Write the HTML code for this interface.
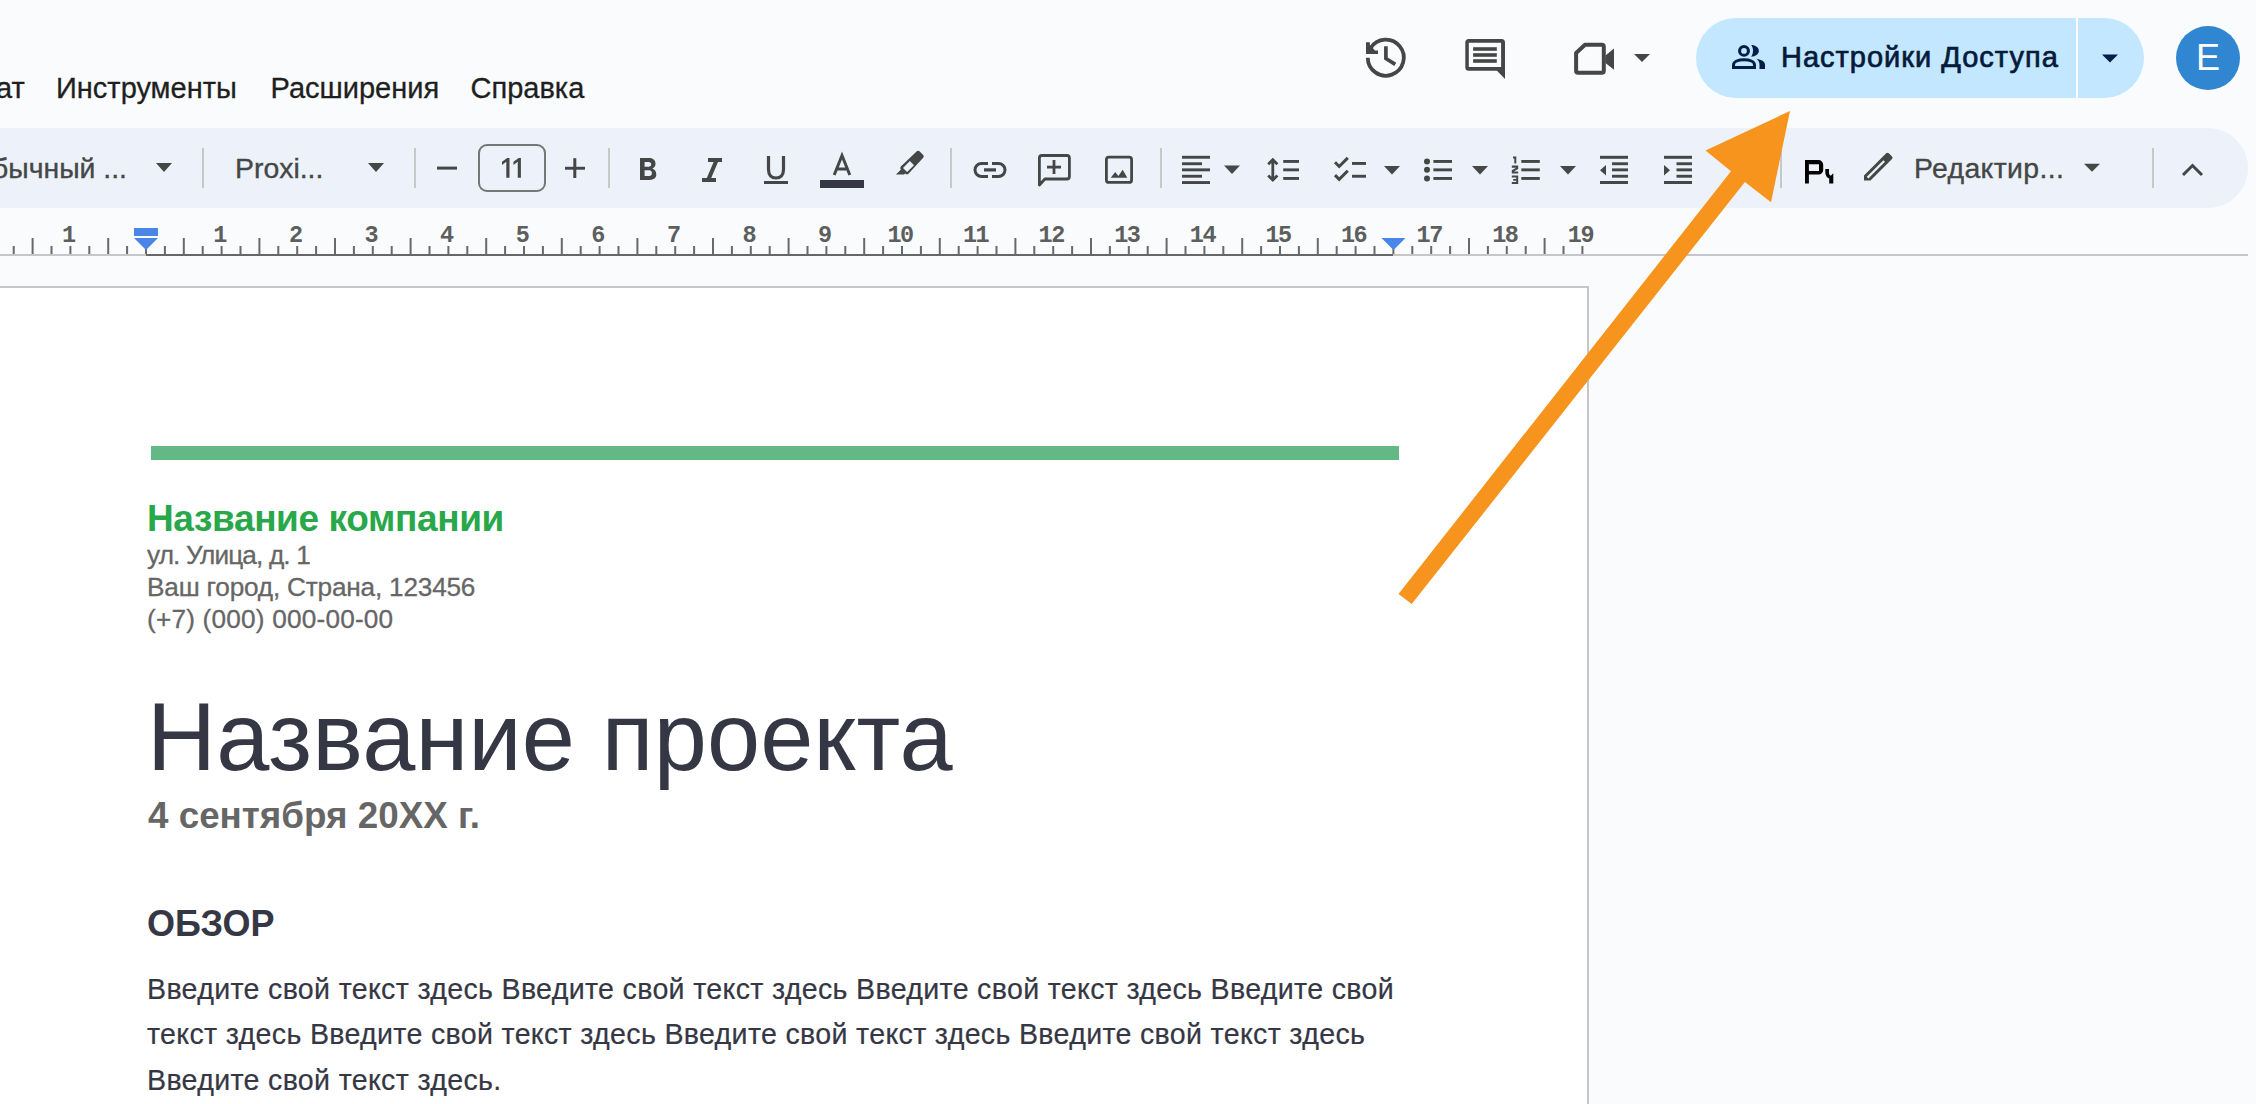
<!DOCTYPE html>
<html><head><meta charset="utf-8">
<style>
*{margin:0;padding:0;box-sizing:border-box}
html,body{width:2256px;height:1104px;overflow:hidden;background:#f9fbfd;font-family:"Liberation Sans",sans-serif;position:relative}
.a{position:absolute;white-space:nowrap}
.menu{font-size:29px;color:#1f1f1f;top:71.3px;line-height:34px;-webkit-text-stroke:0.3px #1f1f1f}
.tb{position:absolute;left:-40px;top:128px;width:2288px;height:80px;background:#edf2fa;border-radius:40px}
.tt{font-size:28.4px;color:#444746;line-height:34px;top:151px;-webkit-text-stroke:0.35px #444746}
.sep{position:absolute;width:2px;background:#c7c7c7;top:148px;height:40px}
.ruler-num{position:absolute;font-size:21px;color:#5f6368;top:222px;line-height:24px;transform:translateX(-50%)}
.page{position:absolute;left:-10px;top:286px;width:1599px;height:900px;background:#fff;border:2px solid #c6c6c6}
.doc{position:absolute;white-space:nowrap}
</style></head><body>

<!-- menu -->
<div class="a menu" style="left:-4px">ат</div>
<div class="a menu" style="left:56px">Инструменты</div>
<div class="a menu" style="left:270.5px">Расширения</div>
<div class="a menu" style="left:470.5px">Справка</div>

<!-- top right icons -->
<svg class="a" style="left:0;top:0" width="1700" height="100" viewBox="0 0 1700 100" fill="#444746">
<path d="M1367.8 57.7A18 18 0 1 0 1370.5 48.2" fill="none" stroke="#444746" stroke-width="3.8"/>
<path d="M1366 42.2H1369.9V45L1375 50.4H1378V54H1366Z"/>
<path d="M1385.9 46.2V58.5L1395.3 64.4" fill="none" stroke="#444746" stroke-width="3.7"/>
<path fill-rule="evenodd" d="M1468.8 38.9H1501.5A3.5 3.5 0 0 1 1505 42.4V78.9L1497 70.8H1468.8A3.5 3.5 0 0 1 1465.3 67.3V42.4A3.5 3.5 0 0 1 1468.8 38.9ZM1468.8 42.8V66.9H1501.1V42.8Z"/>
<rect x="1473.1" y="47.2" width="23.7" height="3.6"/>
<rect x="1473.1" y="53.2" width="23.7" height="3.6"/>
<rect x="1473.1" y="59.2" width="23.7" height="3.6"/>
</svg>
<svg class="a" style="left:1573px;top:40px" width="44" height="36" viewBox="0 0 44 36" fill="none" stroke="#444746" stroke-width="4" stroke-linejoin="round">
<path d="M12 4.8H28.8a2 2 0 0 1 2 2V30.8a2 2 0 0 1-2 2H5.1a2 2 0 0 1-2-2V13z"/>
<path d="M32.5 15.5L41 8.4V29.8L32.5 23Z" fill="#444746" stroke="none"/>
</svg>
<svg class="a" style="left:1634px;top:54px" width="16" height="8" viewBox="0 0 16 8"><path d="M0 0h16L8 8z" fill="#444746"/></svg>

<!-- share button -->
<div class="a" style="left:1696px;top:18px;width:448px;height:80px;border-radius:40px;background:#c2e7ff"></div>
<div class="a" style="left:2076px;top:18px;width:2px;height:80px;background:#f9fbfd"></div>
<svg class="a" style="left:0;top:0" width="1800" height="100" viewBox="0 0 1800 100" fill="#041e49">
<circle cx="1744" cy="50.9" r="4.4" fill="none" stroke="#041e49" stroke-width="3.1"/>
<path d="M1733.5 67.4V65C1733.5 61.5 1738.5 59.8 1744 59.8C1749.5 59.8 1754.5 61.5 1754.5 65V67.4Z" fill="none" stroke="#041e49" stroke-width="3"/>
<path d="M1751.2 45C1755.5 45 1758.9 47.6 1758.9 50.85C1758.9 54.1 1755.5 56.7 1751.2 56.7C1752.5 55 1753 53 1753 50.85C1753 48.7 1752.5 46.7 1751.2 45Z"/>
<path d="M1756.5 58.7C1761.8 59.6 1765 61.8 1765 64.5V68.9H1759.5V64.5C1759.5 62.3 1758.5 60.3 1756.5 58.7Z"/>
</svg>
<div class="a" id="share" style="left:1781px;top:57.2px;font-size:29px;font-weight:normal;-webkit-text-stroke:0.7px #061a3a;color:#061a3a;line-height:0;letter-spacing:1px">Настройки Доступа</div>
<svg class="a" style="left:2102px;top:54px" width="16" height="9" viewBox="0 0 16 8"><path d="M0 0h16L8 8z" fill="#041e49"/></svg>

<!-- avatar -->
<div class="a" style="left:2176px;top:26px;width:64px;height:64px;border-radius:50%;background:#3086d0;color:#fff;font-size:36px;line-height:64px;text-align:center">E</div>

<!-- ruler -->
<svg class="a" style="left:0;top:0" width="2256" height="290" viewBox="0 0 2256 290">
<rect x="0" y="254" width="2248" height="2" fill="#c7c7c7"/>
<rect x="146" y="254" width="1247" height="2" fill="#656866"/>
<g fill="#676a68"><rect x="12.7" y="246" width="2" height="8"/><rect x="31.6" y="238" width="2" height="16"/><rect x="50.5" y="246" width="2" height="8"/><rect x="69.4" y="246" width="2" height="8"/><rect x="88.3" y="246" width="2" height="8"/><rect x="107.2" y="238" width="2" height="16"/><rect x="126.1" y="246" width="2" height="8"/><rect x="145.0" y="246" width="2" height="8"/><rect x="163.9" y="246" width="2" height="8"/><rect x="182.8" y="238" width="2" height="16"/><rect x="201.7" y="246" width="2" height="8"/><rect x="220.6" y="246" width="2" height="8"/><rect x="239.5" y="246" width="2" height="8"/><rect x="258.4" y="238" width="2" height="16"/><rect x="277.3" y="246" width="2" height="8"/><rect x="296.2" y="246" width="2" height="8"/><rect x="315.1" y="246" width="2" height="8"/><rect x="334.0" y="238" width="2" height="16"/><rect x="352.9" y="246" width="2" height="8"/><rect x="371.8" y="246" width="2" height="8"/><rect x="390.7" y="246" width="2" height="8"/><rect x="409.6" y="238" width="2" height="16"/><rect x="428.5" y="246" width="2" height="8"/><rect x="447.4" y="246" width="2" height="8"/><rect x="466.3" y="246" width="2" height="8"/><rect x="485.2" y="238" width="2" height="16"/><rect x="504.1" y="246" width="2" height="8"/><rect x="523.0" y="246" width="2" height="8"/><rect x="541.9" y="246" width="2" height="8"/><rect x="560.8" y="238" width="2" height="16"/><rect x="579.7" y="246" width="2" height="8"/><rect x="598.6" y="246" width="2" height="8"/><rect x="617.5" y="246" width="2" height="8"/><rect x="636.4" y="238" width="2" height="16"/><rect x="655.3" y="246" width="2" height="8"/><rect x="674.2" y="246" width="2" height="8"/><rect x="693.1" y="246" width="2" height="8"/><rect x="712.0" y="238" width="2" height="16"/><rect x="730.9" y="246" width="2" height="8"/><rect x="749.8" y="246" width="2" height="8"/><rect x="768.7" y="246" width="2" height="8"/><rect x="787.6" y="238" width="2" height="16"/><rect x="806.5" y="246" width="2" height="8"/><rect x="825.4" y="246" width="2" height="8"/><rect x="844.3" y="246" width="2" height="8"/><rect x="863.2" y="238" width="2" height="16"/><rect x="882.1" y="246" width="2" height="8"/><rect x="901.0" y="246" width="2" height="8"/><rect x="919.9" y="246" width="2" height="8"/><rect x="938.8" y="238" width="2" height="16"/><rect x="957.7" y="246" width="2" height="8"/><rect x="976.6" y="246" width="2" height="8"/><rect x="995.5" y="246" width="2" height="8"/><rect x="1014.4" y="238" width="2" height="16"/><rect x="1033.3" y="246" width="2" height="8"/><rect x="1052.2" y="246" width="2" height="8"/><rect x="1071.1" y="246" width="2" height="8"/><rect x="1090.0" y="238" width="2" height="16"/><rect x="1108.9" y="246" width="2" height="8"/><rect x="1127.8" y="246" width="2" height="8"/><rect x="1146.7" y="246" width="2" height="8"/><rect x="1165.6" y="238" width="2" height="16"/><rect x="1184.5" y="246" width="2" height="8"/><rect x="1203.4" y="246" width="2" height="8"/><rect x="1222.3" y="246" width="2" height="8"/><rect x="1241.2" y="238" width="2" height="16"/><rect x="1260.1" y="246" width="2" height="8"/><rect x="1279.0" y="246" width="2" height="8"/><rect x="1297.9" y="246" width="2" height="8"/><rect x="1316.8" y="238" width="2" height="16"/><rect x="1335.7" y="246" width="2" height="8"/><rect x="1354.6" y="246" width="2" height="8"/><rect x="1373.5" y="246" width="2" height="8"/><rect x="1392.4" y="238" width="2" height="16"/><rect x="1411.3" y="246" width="2" height="8"/><rect x="1430.2" y="246" width="2" height="8"/><rect x="1449.1" y="246" width="2" height="8"/><rect x="1468.0" y="238" width="2" height="16"/><rect x="1486.9" y="246" width="2" height="8"/><rect x="1505.8" y="246" width="2" height="8"/><rect x="1524.7" y="246" width="2" height="8"/><rect x="1543.6" y="238" width="2" height="16"/><rect x="1562.5" y="246" width="2" height="8"/><rect x="1581.4" y="246" width="2" height="8"/></g>
<g fill="#5c5f5d" font-family="Liberation Mono" font-size="23.5" font-weight="bold" letter-spacing="-1.5" text-anchor="middle" transform="translate(-2 0)"><text x="70.4" y="242">1</text><text x="221.6" y="242">1</text><text x="297.2" y="242">2</text><text x="372.8" y="242">3</text><text x="448.4" y="242">4</text><text x="524.0" y="242">5</text><text x="599.6" y="242">6</text><text x="675.2" y="242">7</text><text x="750.8" y="242">8</text><text x="826.4" y="242">9</text><text x="902.0" y="242">10</text><text x="977.6" y="242">11</text><text x="1053.2" y="242">12</text><text x="1128.8" y="242">13</text><text x="1204.4" y="242">14</text><text x="1280.0" y="242">15</text><text x="1355.6" y="242">16</text><text x="1431.2" y="242">17</text><text x="1506.8" y="242">18</text><text x="1582.4" y="242">19</text></g>
<rect x="134" y="228" width="24" height="8" fill="#4a86e8"/>
<path d="M134 238h24l-12 12z" fill="#4a86e8"/>
<path d="M1381.5 238h24l-12 12z" fill="#4a86e8"/>
</svg>
<!-- page -->
<div class="a" style="left:-10px;top:286px;width:1599px;height:900px;background:#fff;border:2px solid #c6c6c6"></div>
<div class="a" style="left:151px;top:446px;width:1248px;height:14px;background:#63b886"></div>
<div class="doc" id="d1" style="left:147px;top:519px;font-size:37px;font-weight:bold;color:#29a84b;line-height:0;letter-spacing:-0.37px">Название компании</div>
<div class="doc" id="d2" style="left:147px;top:554.9px;font-size:26.2px;color:#666;line-height:0;letter-spacing:-0.85px;-webkit-text-stroke:0.3px #666">ул. Улица, д. 1</div>
<div class="doc" id="d3" style="left:147px;top:586.6px;font-size:26.2px;color:#666;line-height:0;letter-spacing:-0.2px;-webkit-text-stroke:0.3px #666">Ваш город, Страна, 123456</div>
<div class="doc" id="d4" style="left:147px;top:618.8px;font-size:26.2px;color:#666;line-height:0;letter-spacing:0.2px;-webkit-text-stroke:0.3px #666">(+7) (000) 000-00-00</div>
<div class="doc" id="d5" style="left:147px;top:736.5px;font-size:95.5px;color:#353744;line-height:0;letter-spacing:0.17px">Название проекта</div>
<div class="doc" id="d6" style="left:148px;top:816.1px;font-size:36.8px;font-weight:bold;color:#666;line-height:0;letter-spacing:0px">4 сентября 20XX г.</div>
<div class="doc" id="d7" style="left:147px;top:924.0px;font-size:36px;font-weight:bold;color:#353744;line-height:0;letter-spacing:0px">ОБЗОР</div>
<div class="doc" id="p1" style="left:147px;top:989.0px;font-size:28.6px;color:#353744;line-height:0;letter-spacing:0.32px;-webkit-text-stroke:0.2px #353744">Введите свой текст здесь Введите свой текст здесь Введите свой текст здесь Введите свой</div>
<div class="doc" id="p2" style="left:147px;top:1034.2px;font-size:28.6px;color:#353744;line-height:0;letter-spacing:0.32px;-webkit-text-stroke:0.2px #353744">текст здесь Введите свой текст здесь Введите свой текст здесь Введите свой текст здесь</div>
<div class="doc" id="p3" style="left:147px;top:1080.3px;font-size:28.6px;color:#353744;line-height:0;letter-spacing:0.32px;-webkit-text-stroke:0.2px #353744">Введите свой текст здесь.</div>
<!-- toolbar -->
<div class="tb"></div>
<div class="a tt" style="left:-8px">бычный ...</div>
<div class="sep" style="left:202px"></div>
<div class="a tt" style="left:235px">Proxi...</div>
<div class="sep" style="left:414px"></div>
<div class="a" style="left:478px;top:144px;width:68px;height:48px;border:2px solid #747775;border-radius:9px;font-size:28.4px;color:#444746;text-align:center;line-height:43px;-webkit-text-stroke:0.35px #444746;letter-spacing:-1px"></div>
<div class="sep" style="left:608px"></div>
<div class="sep" style="left:950px"></div>
<div class="sep" style="left:1160px"></div>
<div class="sep" style="left:1780px"></div>
<div class="a tt" style="left:1914px;letter-spacing:0.35px">Редактир...</div>
<div class="sep" style="left:2152px"></div>

<svg class="a" style="left:0;top:0" width="2256" height="300" viewBox="0 0 2256 300">
<g fill="#444746">
<!-- dropdown arrows -->
<path d="M156 163h16l-8 9z"/>
<path d="M368 163h16l-8 9z"/>
<path d="M1224 165.5h16l-8 8.5z"/>
<path d="M1384 166h16l-8 8.5z"/>
<path d="M1472 166h16l-8 8.5z"/>
<path d="M1560 166h16l-8 8.5z"/>
<path d="M2084 163.7h16l-8 8z"/>
<!-- minus plus -->
<path d="M507.2 157.9H509.5V177.75H506.3V161.8L502 164.9V161.7ZM518.65 157.9H520.9V177.75H517.75V161.8L513.45 164.9V161.7Z"/>
<rect x="437" y="166.6" width="20" height="3"/>
<rect x="565" y="166.8" width="20" height="2.9"/>
<rect x="573.3" y="158.2" width="3" height="19.8"/>
<!-- B -->
<path fill-rule="evenodd" d="M640 158H649C653.5 158 655.5 160.5 655.5 163.8C655.5 166.2 654.3 167.8 652.3 168.6C655 169.4 656.3 171.8 656.3 174.6C656.3 178 653.8 180 649.5 180H640ZM644.6 161.9H648.6C650.4 161.9 651.2 162.9 651.2 164.3C651.2 165.7 650.4 166.7 648.6 166.7H644.6ZM644.6 170.3H649.2C651 170.3 651.9 171.5 651.9 173C651.9 174.6 651 176.1 649.2 176.1H644.6Z"/>
<!-- I -->
<path d="M708 158h14v4h-14zM702 178h14v4h-14zM713.6 162h4.4l-6.8 16h-4.4z"/>
<!-- U -->
<path d="M768.5 156v13.5c0 5.5 3 8.5 7.5 8.5s7.5-3 7.5-8.5V156" fill="none" stroke="#444746" stroke-width="3.2"/>
<rect x="764" y="181" width="24" height="3"/>
<!-- A -->
<path d="M834.2 175L842 155.5L849.8 175M836.6 169H847.4" fill="none" stroke="#444746" stroke-width="3"/>
<rect x="820" y="180" width="44" height="8" fill="#353744"/>
<!-- highlighter -->
<path fill-rule="evenodd" d="M917.1 151.1Q918.3 150.3 919.5 151.2L923.2 154.9Q924.3 156.1 923.4 157.6L908.5 173.8Q907.8 174.6 906.5 174.6L905.2 173.6L904 174.6H895.9L900.8 169.8Q899.6 168 900.8 166.6ZM903 168L909.9 161.1L914 165.2L907.1 172Z"/>
<!-- link -->
<path d="M988 163.5h-6.5a6.5 6.5 0 0 0 0 13H988M992 163.5h6.5a6.5 6.5 0 0 1 0 13H992" fill="none" stroke="#444746" stroke-width="3"/>
<rect x="984" y="168.3" width="12" height="3.2"/>
<!-- add comment -->
<path d="M1039.4 185V158a2.5 2.5 0 0 1 2.5-2.5h25a2.5 2.5 0 0 1 2.5 2.5v18.5a2.5 2.5 0 0 1-2.5 2.5h-22z" fill="none" stroke="#444746" stroke-width="2.8" stroke-linejoin="round"/>
<path d="M1038 182.5v3l5-5z"/>
<rect x="1047" y="165.7" width="14" height="2.8"/>
<rect x="1052.6" y="160" width="2.8" height="14"/>
<!-- image -->
<rect x="1106.4" y="157.2" width="25.2" height="25.2" rx="2.5" fill="none" stroke="#444746" stroke-width="2.8"/>
<path d="M1110.7 177.7l4.5-5.7 3.2 4 4.3-6.3 4.6 8z"/>
<!-- align left -->
<rect x="1182" y="155.8" width="28" height="2.9"/>
<rect x="1182" y="162.3" width="20" height="2.9"/>
<rect x="1182" y="168.4" width="28" height="2.9"/>
<rect x="1182" y="174.8" width="20" height="2.9"/>
<rect x="1182" y="181.1" width="28" height="2.9"/>
<!-- line spacing -->
<path d="M1268.2 164.3L1272.8 159.8L1277.4 164.3M1268.2 175.6L1272.8 180.1L1277.4 175.6M1272.8 160V180" fill="none" stroke="#444746" stroke-width="2.8"/>
<rect x="1283.2" y="160" width="15.8" height="2.9"/>
<rect x="1283.2" y="168.4" width="15.8" height="2.9"/>
<rect x="1283.2" y="177" width="15.8" height="2.9"/>
<!-- checklist -->
<path d="M1335 162.3l4.2 4.2 8.6-8.6M1335 175.1l4.2 4.2 8.6-8.6" fill="none" stroke="#444746" stroke-width="3"/>
<rect x="1352" y="162" width="14" height="2.9"/>
<rect x="1352" y="174.8" width="14" height="2.9"/>
<!-- bullets -->
<circle cx="1427" cy="161.4" r="3"/><circle cx="1427" cy="169.8" r="3"/><circle cx="1427" cy="178.4" r="3"/>
<rect x="1433.4" y="160" width="18.6" height="2.9"/>
<rect x="1433.4" y="168.4" width="18.6" height="2.9"/>
<rect x="1433.4" y="177" width="18.6" height="2.9"/>
<!-- numbered -->
<path d="M1513 156.5h3.3v7h-2v-5h-1.3z"/>
<path d="M1511.8 165.5h6.4v3.5l-4.4 2.5h4.4v2h-6.4v-3.2l4.4-2.6h-4.4z"/>
<path d="M1511.8 175.5h6.4v8.5h-6.4v-2h4.4v-1.3h-3v-1.6h3v-1.6h-4.4z"/>
<rect x="1521.3" y="160" width="18.5" height="2.9"/>
<rect x="1521.3" y="168.4" width="18.5" height="2.9"/>
<rect x="1521.3" y="177" width="18.5" height="2.9"/>
<!-- decrease indent -->
<rect x="1600" y="155.8" width="28" height="3"/>
<rect x="1612" y="162.3" width="16" height="2.9"/>
<rect x="1612" y="168.4" width="16" height="2.9"/>
<rect x="1612" y="174.8" width="16" height="2.9"/>
<rect x="1600" y="181" width="28" height="3"/>
<path d="M1606 164.9v10.5l-6-5.25z"/>
<!-- increase indent -->
<rect x="1664" y="155.8" width="28" height="3"/>
<rect x="1676.5" y="162.3" width="15.5" height="2.9"/>
<rect x="1676.5" y="168.4" width="15.5" height="2.9"/>
<rect x="1676.5" y="174.8" width="15.5" height="2.9"/>
<rect x="1664" y="181" width="28" height="3"/>
<path d="M1664 164.9v10.5l6-5.25z"/>
<!-- pencil -->
<path d="M1864 175.5L1886.2 153.3Q1887.5 152 1888.8 153.3L1892 156.5Q1893.3 157.8 1892 159.1L1870.5 180.6H1864Z"/>
<path d="M1867.6 177.6L1884.2 161" stroke="#edf2fa" stroke-width="2.2"/>
<!-- chevron up -->
<path d="M2183 175l9.5-9.5 9.5 9.5" fill="none" stroke="#444746" stroke-width="3"/>
</g>
<!-- P icon -->
<path fill="#000" fill-rule="evenodd" d="M1805 160.1H1818.5A4.7 4.7 0 0 1 1823.2 164.8V170A4.7 4.7 0 0 1 1818.5 174.6H1808.9V183.6H1805ZM1808.9 164.2V170.9H1819V164.2Z"/>
<path fill="#000" d="M1825.3 169H1829V172.5C1829 174.3 1829.8 175.3 1830.8 175.8L1833.3 173.2V183.6H1829.2V178.6C1827 177.6 1825.3 175.5 1825.3 172.5Z"/>
</svg>
<!-- arrow -->
<svg class="a" style="left:0;top:0" width="2256" height="1104" viewBox="0 0 2256 1104">
<path d="M1398.5 594L1731 171.2L1705.5 150.5L1790 111L1771 202.2L1744.9 182L1411.7 604.1Z" fill="#f7941e"/>
</svg>
</body></html>
